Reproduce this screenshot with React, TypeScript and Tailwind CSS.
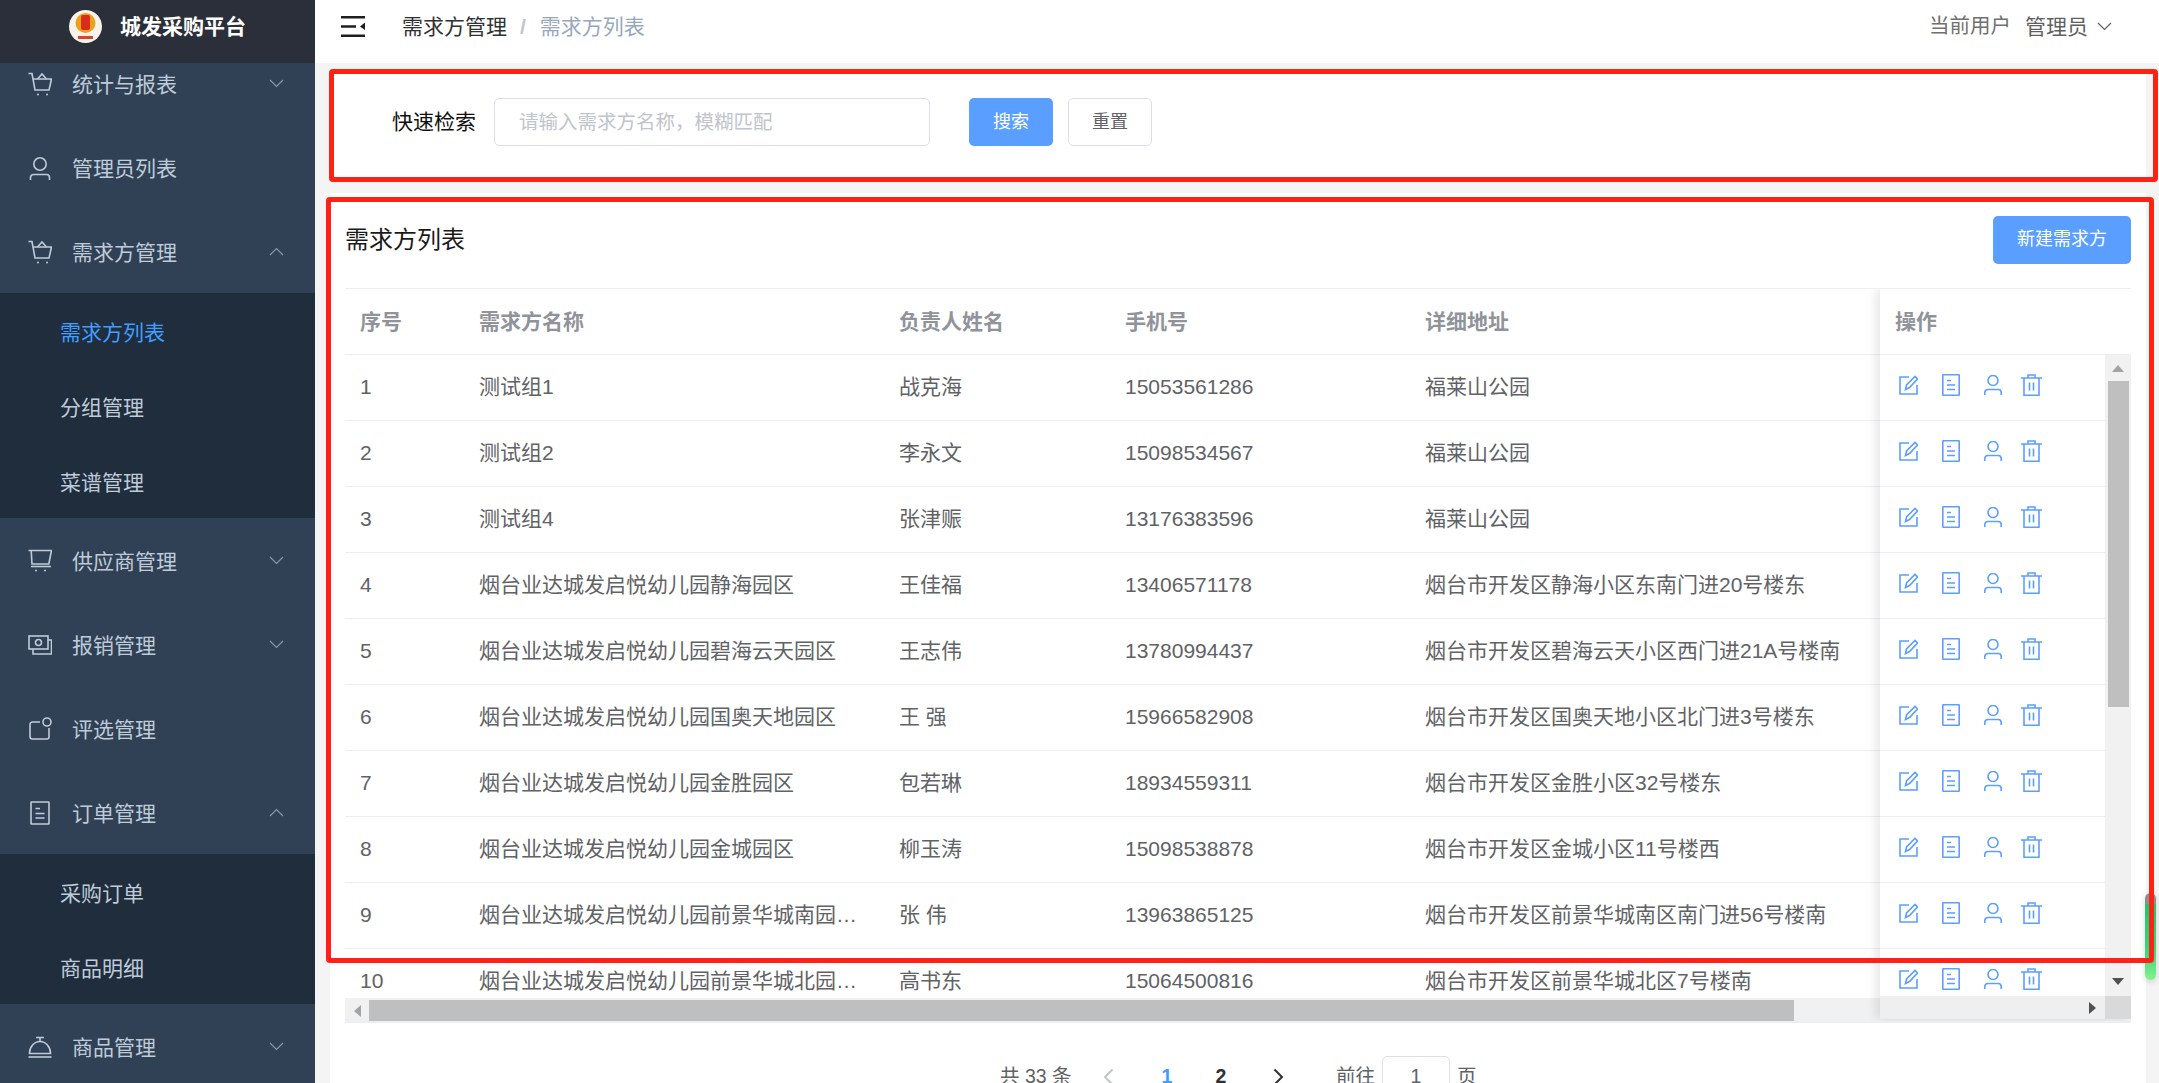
import { ReactNode } from "react"

const rows = [
  ["1", "测试组1", "战克海", "15053561286", "福莱山公园"],
  ["2", "测试组2", "李永文", "15098534567", "福莱山公园"],
  ["3", "测试组4", "张津赈", "13176383596", "福莱山公园"],
  ["4", "烟台业达城发启悦幼儿园静海园区", "王佳福", "13406571178", "烟台市开发区静海小区东南门进20号楼东"],
  ["5", "烟台业达城发启悦幼儿园碧海云天园区", "王志伟", "13780994437", "烟台市开发区碧海云天小区西门进21A号楼南"],
  ["6", "烟台业达城发启悦幼儿园国奥天地园区", "王 强", "15966582908", "烟台市开发区国奥天地小区北门进3号楼东"],
  ["7", "烟台业达城发启悦幼儿园金胜园区", "包若琳", "18934559311", "烟台市开发区金胜小区32号楼东"],
  ["8", "烟台业达城发启悦幼儿园金城园区", "柳玉涛", "15098538878", "烟台市开发区金城小区11号楼西"],
  ["9", "烟台业达城发启悦幼儿园前景华城南园园区", "张 伟", "13963865125", "烟台市开发区前景华城南区南门进56号楼南"],
  ["10", "烟台业达城发启悦幼儿园前景华城北园园区", "高书东", "15064500816", "烟台市开发区前景华城北区7号楼南"],
]

function Line({ w, h, children }: { w: number; h: number; children: ReactNode }) {
  return (
    <svg width={w} height={h} viewBox={`0 0 ${w} ${h}`} fill="none" stroke="currentColor" strokeWidth="1.6" className="shrink-0">
      {children}
    </svg>
  )
}

const BagIcon = () => (
  <Line w={24} h={24}>
    <path d="M0.5 1.5H4L7 18H21L23.5 7H4.9" />
    <path d="M9.5 7L14 2L18.5 7" />
    <circle cx="10" cy="22.5" r="1" fill="currentColor" stroke="none" />
    <circle cx="19" cy="22.5" r="1" fill="currentColor" stroke="none" />
  </Line>
)

const UserIcon = () => (
  <Line w={24} h={24}>
    <circle cx="12" cy="8" r="6.2" />
    <path d="M2.5 24V21.5A3 3 0 0 1 5.5 18.5H18.5A3 3 0 0 1 21.5 21.5V24" />
  </Line>
)

const CartIcon = () => (
  <Line w={24} h={24}>
    <path d="M0.5 1.5H23.5L20.8 15H4L3.2 1.5" />
    <path d="M3 17.5H23" />
    <circle cx="8" cy="21.5" r="1" fill="currentColor" stroke="none" />
    <circle cx="17" cy="21.5" r="1" fill="currentColor" stroke="none" />
  </Line>
)

const ReportIcon = () => (
  <Line w={24} h={24}>
    <rect x="1" y="3" width="19" height="13" />
    <circle cx="10.5" cy="9.5" r="3" />
    <path d="M20 7H23.5V21H5V16" />
  </Line>
)

const AwardIcon = () => (
  <Line w={24} h={24}>
    <path d="M12 5H4.5A2.5 2.5 0 0 0 2 7.5V19.5A2.5 2.5 0 0 0 4.5 22H19A2 2 0 0 0 21 20V11" />
    <circle cx="19" cy="5" r="4" />
  </Line>
)

const DocIcon = () => (
  <Line w={24} h={24}>
    <rect x="3" y="1" width="18" height="22" rx="0.5" />
    <path d="M7.5 7.5H12M7.5 12.5H16.5M7.5 17H16.5" />
  </Line>
)

const BellIcon = () => (
  <Line w={24} h={24}>
    <path d="M8 2.5H16M12 2.5V6" />
    <path d="M1.5 18.5A10.5 12 0 0 1 22.5 18.5Z" />
    <path d="M0.5 22H23.5" />
  </Line>
)

function Chevron({ up, className }: { up?: boolean; className: string }) {
  return (
    <svg width="15" height="9" viewBox="0 0 15 9" fill="none" stroke="currentColor" strokeWidth="1.2" className={className}>
      <path d={up ? "M1 8L7.5 1.5L14 8" : "M1 1L7.5 7.5L14 1"} />
    </svg>
  )
}

function MenuItem({ icon, label, open }: { icon?: ReactNode; label: string; open?: boolean }) {
  return (
    <div className="flex h-[84px] items-center pl-[28px] pr-[31px] pt-[2px] text-[#bfcbd9]">
      {icon}
      <span className="ml-[20px] flex-1 pt-[2px]">{label}</span>
      {open === undefined ? null : <Chevron up={open} className="mb-[2px] text-[#8a97a8]" />}
    </div>
  )
}

function SubItem({ label, active }: { label: string; active?: boolean }) {
  return <div className={`flex h-[75px] items-center pl-[60px] pt-[4px] ${active ? "text-[#409eff]" : "text-[#bfcbd9]"}`}>{label}</div>
}

function Sidebar() {
  return (
    <aside className="flex h-full w-[315px] shrink-0 flex-col overflow-hidden bg-[#304156] text-[21px]">
      <div className="relative z-10 flex h-[63px] shrink-0 items-center bg-[#2b2f3a] pb-[10px] pl-[69px]">
        <svg width="33" height="33" viewBox="0 0 33 33" className="shrink-0">
          <ellipse cx="16.5" cy="16.5" rx="16.5" ry="16.5" fill="#f7f3ea" />
          <circle cx="16.5" cy="13" r="10" fill="#eda01c" />
          <rect x="12" y="5" width="9" height="15" rx="2" fill="#d92c1c" />
          <rect x="9" y="26" width="15" height="3" fill="#d8442c" />
        </svg>
        <span className="ml-[18px] font-bold text-white">城发采购平台</span>
      </div>
      <div className="-mt-[22px]">
        <MenuItem icon={<BagIcon />} label="统计与报表" open={false} />
        <MenuItem icon={<UserIcon />} label="管理员列表" />
        <MenuItem icon={<BagIcon />} label="需求方管理" open />
        <div className="bg-[#1f2d3d]">
          <SubItem label="需求方列表" active />
          <SubItem label="分组管理" />
          <SubItem label="菜谱管理" />
        </div>
        <MenuItem icon={<CartIcon />} label="供应商管理" open={false} />
        <MenuItem icon={<ReportIcon />} label="报销管理" open={false} />
        <MenuItem icon={<AwardIcon />} label="评选管理" />
        <MenuItem icon={<DocIcon />} label="订单管理" open />
        <div className="bg-[#1f2d3d]">
          <SubItem label="采购订单" />
          <SubItem label="商品明细" />
        </div>
        <MenuItem icon={<BellIcon />} label="商品管理" open={false} />
      </div>
    </aside>
  )
}

function Header() {
  return (
    <header className="flex h-[63px] shrink-0 items-center bg-white pb-[10px] pl-[26px] pr-[47px] text-[21px]">
      <svg width="24" height="21" viewBox="0 0 24 21" className="shrink-0">
        <path d="M0 0H24V2.4H0ZM0 9.3H15V11.7H0ZM0 18.6H24V21H0ZM24 6.5V14L19 10.5Z" fill="#1f1f1f" />
      </svg>
      <span className="ml-[37px] text-[#303133]">需求方管理</span>
      <span className="ml-[13px] font-bold text-[#c0c4cc]">/</span>
      <span className="ml-[14px] text-[#97a8be]">需求方列表</span>
      <span className="ml-auto text-[20.5px] text-[#707070]">当前用户</span>
      <span className="ml-[14px] text-[#5f5f5f]">管理员</span>
      <Chevron className="ml-[9px] text-[#5f5f5f]" />
    </header>
  )
}

function SearchCard() {
  return (
    <section className="mt-[9px] flex h-[106px] shrink-0 items-center bg-white pb-[6px] pl-[62px]">
      <span className="text-[21px] text-[#111]">快速检索</span>
      <input
        placeholder="请输入需求方名称，模糊匹配"
        className="ml-[18px] h-[48px] w-[436px] rounded-[5px] border border-[#dcdfe6] bg-white pl-[24px] text-[19.5px] outline-none placeholder:text-[#c0c4cc]"
      />
      <button className="ml-[39px] h-[48px] w-[84px] rounded-[5px] bg-[#5a9fff] text-[18px] text-white">搜索</button>
      <button className="ml-[15px] h-[48px] w-[84px] rounded-[5px] border border-[#dcdfe6] bg-white text-[18px] text-[#606266]">重置</button>
    </section>
  )
}

function RowIcons() {
  return (
    <div className="flex h-[66px] shrink-0 items-center border-b border-[#ebeef5] pb-[5px] pl-[19px] text-[#5c9fff]">
      <Line w={19} h={20}>
        <path d="M10 2H1V19H18V10" />
        <path d="M6.5 14.5L7.5 10L16 1.5L18.5 4L10.5 12.5Z" />
      </Line>
      <div className="ml-[24px]">
        <Line w={18} h={22}>
          <rect x="0.8" y="0.8" width="16.4" height="20.4" rx="0.5" />
          <path d="M5 6.5H9M5 11H13M5 15.5H13" />
        </Line>
      </div>
      <div className="ml-[24px]">
        <Line w={18} h={20}>
          <circle cx="9" cy="5.5" r="5" />
          <path d="M0.8 20V17.5A3 3 0 0 1 3.8 14.5H14.2A3 3 0 0 1 17.2 17.5V20" />
        </Line>
      </div>
      <div className="ml-[19px]">
        <Line w={21} h={22}>
          <path d="M0 4H21M7 4V1H14V4M3 4V21.2H18V4" />
          <path d="M8.5 8.5V16.5M12.5 8.5V16.5" />
        </Line>
      </div>
    </div>
  )
}

function Triangle({ dir }: { dir: "up" | "down" | "left" | "right" }) {
  const d = { up: "M0 7L6 0L12 7Z", down: "M0 0L6 7L12 0Z", left: "M7 0V12L0 6Z", right: "M0 0V12L7 6Z" }[dir]
  const vertical = dir === "up" || dir === "down"
  return (
    <svg width={vertical ? 12 : 7} height={vertical ? 7 : 12} viewBox={vertical ? "0 0 12 7" : "0 0 7 12"}>
      <path d={d} fill={dir === "up" ? "#a3a3a3" : dir === "left" ? "#a3a3a3" : "#505050"} />
    </svg>
  )
}

function FixedColumn() {
  return (
    <div className="absolute bottom-[2px] right-0 top-0 flex w-[251px] flex-col bg-white shadow-[-4px_0_10px_rgba(0,0,0,0.10)]">
      <div className="flex h-[66px] shrink-0 items-center border-b border-[#ebeef5] pl-[15px] font-bold text-[#909399]">操作</div>
      <div className="flex min-h-0 flex-1">
        <div className="flex min-w-0 flex-1 flex-col">
          <div className="min-h-0 flex-1 overflow-hidden">
            {rows.map((r) => (
              <RowIcons key={r[0]} />
            ))}
          </div>
          <div className="flex h-[23px] shrink-0 items-center justify-end bg-[#efefef] pr-[9px]">
            <Triangle dir="right" />
          </div>
        </div>
        <div className="flex w-[26px] shrink-0 flex-col bg-[#f1f1f1]">
          <div className="flex h-[26px] shrink-0 items-center justify-center">
            <Triangle dir="up" />
          </div>
          <div className="ml-[3px] h-[326px] w-[21px] shrink-0 bg-[#bfbfbf]" />
          <div className="flex flex-1 items-end justify-center pb-[11px]">
            <Triangle dir="down" />
          </div>
          <div className="h-[23px] shrink-0 bg-[#d9d9d9]" />
        </div>
      </div>
    </div>
  )
}

function DataTable() {
  return (
    <div className="relative flex h-[735px] shrink-0 flex-col overflow-hidden border-t border-b-2 border-t-[#ebeef5] border-b-[#ebeef5] text-[21px]">
      <div className="grid h-[66px] shrink-0 grid-cols-[119px_420px_226px_300px_1fr] items-center border-b border-[#ebeef5] font-bold text-[#909399]">
        <span className="pl-[15px]">序号</span>
        <span className="pl-[15px]">需求方名称</span>
        <span className="pl-[15px]">负责人姓名</span>
        <span className="pl-[15px]">手机号</span>
        <span className="pl-[15px]">详细地址</span>
      </div>
      <div className="min-h-0 flex-1 overflow-hidden text-[#606266]">
        {rows.map((r) => (
          <div key={r[0]} className="grid h-[66px] grid-cols-[119px_420px_226px_300px_1fr] items-center border-b border-[#ebeef5] pb-[2px]">
            <span className="pl-[15px]">{r[0]}</span>
            <span className="truncate px-[15px]">{r[1]}</span>
            <span className="pl-[15px]">{r[2]}</span>
            <span className="pl-[15px]">{r[3]}</span>
            <span className="pl-[15px]">{r[4]}</span>
          </div>
        ))}
      </div>
      <div className="flex h-[23px] shrink-0 bg-[#f1f1f1] pt-[2px]">
        <div className="flex h-[21px] w-[24px] items-center justify-center">
          <Triangle dir="left" />
        </div>
        <div className="h-[21px] w-[1425px] bg-[#bfbfbf]" />
      </div>
      <FixedColumn />
    </div>
  )
}

function Pagination() {
  return (
    <div className="mt-[33px] flex h-[42px] shrink-0 items-center pl-[655px] text-[19.5px] text-[#606266]">
      <span className="w-[72px] whitespace-nowrap">共 33 条</span>
      <svg width="11" height="18" viewBox="0 0 11 18" fill="none" stroke="#c0c4cc" strokeWidth="2" className="ml-[31px]">
        <path d="M9.5 1.5L2 9L9.5 16.5" />
      </svg>
      <span className="ml-[26px] w-[54px] text-center font-bold text-[#409eff]">1</span>
      <span className="w-[54px] text-center font-bold text-[#303133]">2</span>
      <svg width="11" height="18" viewBox="0 0 11 18" fill="none" stroke="#303133" strokeWidth="2" className="ml-[25px]">
        <path d="M1.5 1.5L9 9L1.5 16.5" />
      </svg>
      <span className="ml-[52px]">前往</span>
      <div className="ml-[7px] flex h-[42px] w-[68px] items-center justify-center rounded-[5px] border border-[#dcdfe6]">1</div>
      <span className="ml-[7px]">页</span>
    </div>
  )
}

function ListCard() {
  return (
    <section className="mt-[15px] flex min-h-0 flex-1 flex-col bg-white px-[15px]">
      <div className="flex h-[95px] shrink-0 items-center justify-between pb-[2px]">
        <h2 className="text-[24px] font-normal text-[#1a1a1a]">需求方列表</h2>
        <button className="h-[48px] w-[138px] rounded-[5px] bg-[#5a9fff] text-[18px] text-white">新建需求方</button>
      </div>
      <DataTable />
      <Pagination />
    </section>
  )
}

export default function App() {
  return (
    <div className="relative flex h-[1083px] w-[2159px] overflow-hidden bg-[#f4f4f4] [font-family:'Liberation_Sans','Noto_Sans_CJK_SC',sans-serif]">
      <Sidebar />
      <main className="flex h-full min-w-0 flex-1 flex-col">
        <Header />
        <div className="flex min-h-0 flex-1 flex-col pl-[15px] pr-[13px]">
          <SearchCard />
          <ListCard />
        </div>
      </main>

      <div className="absolute left-[2145px] top-[893px] h-[87px] w-[11px] rounded-full bg-[linear-gradient(#8f8f8f_0,#8f8f8f_12%,#20c56e_13%,#3ed77c_70%,#86f28e_100%)] shadow-[0_2px_6px_rgba(0,0,0,0.15)]" />
      <div className="pointer-events-none absolute left-[329px] top-[69px] h-[113px] w-[1829px] rounded-[4px] border-[5px] border-[#ff2115]" />
      <div className="pointer-events-none absolute left-[326px] top-[197px] h-[766px] w-[1828px] rounded-[4px] border-[5px] border-[#ff2115]" />
    </div>
  )
}
